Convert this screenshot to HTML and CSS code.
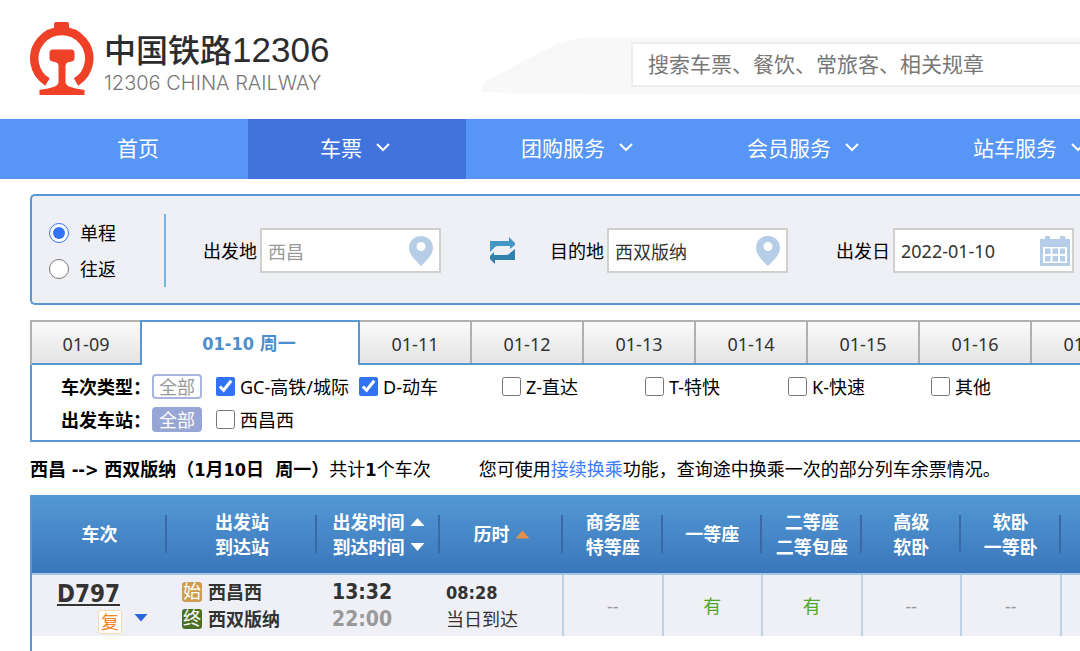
FILE: index.html
```html
<!DOCTYPE html>
<html lang="zh-CN">
<head>
    <meta charset="UTF-8" />
    <meta name="viewport" content="width=device-width, initial-scale=1.0" />
    <title>中国铁路12306</title>
    <link rel="stylesheet" href="styles.css">
</head>
<body>
    <div class="page">

        <header class="header">
            <a class="logo" href="#">
                <svg class="logo-mark" viewBox="0 0 64 74" aria-hidden="true">
                    <path d="M17.500 60A27.500 27.500 0 1 1 46 60" fill="none" stroke="#ee4128" stroke-width="8.500" />
                    <path d="M24 9V2Q24 0 26 0H37Q39 0 39 2V9Z" fill="#ee4128" />
                    <path d="M23 27.500H41Q44.500 27.500 44.500 31V36Q44.500 39 41.500 39.500L38 40.300Q35.500 41 35.500 43.500V59C35.500 64 39 65.500 54.500 68V73H9.500V68C25 65.500 28.500 64 28.500 59V43.500Q28.500 41 26 40.300L22.500 39.500Q19.500 39 19.500 36V31Q19.500 27.500 23 27.500Z" fill="#ee4128" />
                </svg>
                <span class="logo-text">
                    <span class="logo-name">中国铁路<span class="logo-number">12306</span></span>
                    <span class="logo-sub">12306 CHINA RAILWAY</span>
                </span>
            </a>
            <div class="site-search">
                <svg class="search-nose" viewBox="0 0 150 57" aria-hidden="true">
                    <path d="M0 55C0 48 5 44 12 40L66 12C82 3 100 0 118 0H150V57Q70 57 0 55Z" fill="#f8f8f8" />
                </svg>
                <div class="search-body">
                    <input type="text" class="search-input" aria-label="搜索" placeholder="搜索车票、餐饮、常旅客、相关规章" />
                </div>
            </div>
        </header>

        <nav class="nav">
            <a class="nav-item nav-home" href="#">首页</a>
            <a class="nav-item active" href="#">车票
                <svg class="chevron" viewBox="0 0 14 10"><path d="M1 1l6 6 6-6" /></svg>
            </a>
            <a class="nav-item" href="#">团购服务
                <svg class="chevron" viewBox="0 0 14 10"><path d="M1 1l6 6 6-6" /></svg>
            </a>
            <a class="nav-item" href="#">会员服务
                <svg class="chevron" viewBox="0 0 14 10"><path d="M1 1l6 6 6-6" /></svg>
            </a>
            <a class="nav-item" href="#">站车服务
                <svg class="chevron" viewBox="0 0 14 10"><path d="M1 1l6 6 6-6" /></svg>
            </a>
        </nav>

        <main class="content">

            <!-- Ticket query form -->
            <form class="query">
                <div class="trip-type">
                    <label><input type="radio" name="trip" checked />单程</label>
                    <label><input type="radio" name="trip" />往返</label>
                </div>
                <div class="field">
                    <label for="from">出发地</label>
                    <div class="input-box">
                        <input type="text" id="from" class="muted" value="西昌" />
                        <svg class="pin" viewBox="0 0 24 30"><path fill-rule="evenodd" d="M12 0C5 0 0 5 0 12c0 7 7 13 12 18 5-5 12-11 12-18C24 5 19 0 12 0zm0 6a4.500 4.500 0 1 1 0 9 4.500 4.500 0 0 1 0-9z" /></svg>
                    </div>
                </div>
                <button type="button" class="swap" aria-label="交换">
                    <svg viewBox="0 0 26 28">
                        <path d="M1 15V4H20V0L26 6V8L21 12V9H9Q7 9 6 10Z" fill="#4197c5" />
                        <path d="M26 12V23H6V27L1 22V19L5 15V18H17Q20 18 21 16Z" fill="#3280ae" />
                    </svg>
                </button>
                <div class="field">
                    <label for="to">目的地</label>
                    <div class="input-box">
                        <input type="text" id="to" value="西双版纳" />
                        <svg class="pin" viewBox="0 0 24 30"><path fill-rule="evenodd" d="M12 0C5 0 0 5 0 12c0 7 7 13 12 18 5-5 12-11 12-18C24 5 19 0 12 0zm0 6a4.500 4.500 0 1 1 0 9 4.500 4.500 0 0 1 0-9z" /></svg>
                    </div>
                </div>
                <div class="field field-date">
                    <label for="date">出发日</label>
                    <div class="input-box">
                        <input type="text" id="date" value="2022-01-10" />
                        <svg class="calendar" viewBox="0 0 30 30">
                            <path fill-rule="evenodd" d="M0 3H5V0H10V3H20V0H25V3H30V30H0ZM3 11V27H27V11Z" />
                            <path d="M5 12.500h5.500v5.500H5zM12.500 12.500H18v5.500h-5.500zM20 12.500h5v5.500h-5zM5 20h5.500v5.500H5zM12.500 20H18v5.500h-5.500zM20 20h5v5.500h-5z" />
                        </svg>
                    </div>
                </div>
            </form>

            <!-- Date tabs -->
            <div class="tabs">
                <button type="button" class="tab">01-09</button>
                <button type="button" class="tab current">01-10 周一</button>
                <button type="button" class="tab">01-11</button>
                <button type="button" class="tab">01-12</button>
                <button type="button" class="tab">01-13</button>
                <button type="button" class="tab">01-14</button>
                <button type="button" class="tab">01-15</button>
                <button type="button" class="tab">01-16</button>
                <button type="button" class="tab">01-17</button>
            </div>

            <!-- Filters -->
            <div class="filters">
                <div class="filter-row">
                    <span class="filter-name">车次类型：</span>
                    <button type="button" class="all">全部</button>
                    <label><input type="checkbox" checked />GC-高铁/城际</label>
                    <label><input type="checkbox" checked />D-动车</label>
                    <label><input type="checkbox" />Z-直达</label>
                    <label><input type="checkbox" />T-特快</label>
                    <label><input type="checkbox" />K-快速</label>
                    <label><input type="checkbox" />其他</label>
                </div>
                <div class="filter-row">
                    <span class="filter-name">出发车站：</span>
                    <button type="button" class="all selected">全部</button>
                    <label><input type="checkbox" />西昌西</label>
                </div>
            </div>

            <div class="summary">
                <p><strong>西昌 --&gt; 西双版纳（1月10日&nbsp; 周一）</strong>共计<strong>1</strong>个车次</p>
                <p>您可使用<a href="#">接续换乘</a>功能，查询途中换乘一次的部分列车余票情况。</p>
            </div>

            <div class="results">
                <table>
                    <colgroup>
                        <col class="col-train" />
                        <col class="col-station" />
                        <col class="col-time" />
                        <col class="col-time" />
                        <col span="6" />
                    </colgroup>
                    <thead>
                        <tr>
                            <th>车次</th>
                            <th>出发站<br />到达站</th>
                            <th>
                                <span class="sort">出发时间<i class="tri up"></i></span>
                                <span class="sort">到达时间<i class="tri down"></i></span>
                            </th>
                            <th><span class="sort">历时<i class="tri up sorted"></i></span></th>
                            <th>商务座<br />特等座</th>
                            <th>一等座</th>
                            <th>二等座<br />二等包座</th>
                            <th>高级<br />软卧</th>
                            <th>软卧<br />一等卧</th>
                            <th></th>
                        </tr>
                    </thead>
                    <tbody>
                        <tr>
                            <td>
                                <div class="train">
                                    <a href="#">D797</a>
                                    <div class="train-tags"><span class="fu">复</span><i class="tri down more"></i></div>
                                </div>
                            </td>
                            <td>
                                <div class="station"><span class="mark start">始</span>西昌西</div>
                                <div class="station"><span class="mark end">终</span>西双版纳</div>
                            </td>
                            <td class="times"><strong>13:32</strong><strong class="arrive">22:00</strong></td>
                            <td class="duration"><strong>08:28</strong><span>当日到达</span></td>
                            <td class="seat">--</td>
                            <td class="seat yes">有</td>
                            <td class="seat yes">有</td>
                            <td class="seat">--</td>
                            <td class="seat">--</td>
                            <td class="seat"></td>
                        </tr>
                    </tbody>
                </table>
            </div>
        </main>
    </div>
</body>
</html>
```

FILE: styles.css
```css
:root {
    --blue: #5796f6;
    --blue-dark: #4074dc;
    --line: #5798d5;
    --panel: #eff0f6;
    --icon: #b5cde6;
    --font: "Noto Sans", "Noto Sans CJK SC", sans-serif;
    --font-bold: "DejaVu Sans Condensed", "Noto Sans CJK SC", sans-serif;
}

* {
    box-sizing: border-box;
}

body {
    margin: 0;
    overflow-x: hidden;
    background: #fff;
    color: #000;
    font-family: var(--font);
    font-size: 18px;
    line-height: 26px;
}

button,
input {
    font-family: inherit;
    font-size: inherit;
}

strong {
    font-family: var(--font-bold);
}

p {
    margin: 0;
}

svg {
    display: block;
    flex: none;
}

.page {
    min-width: 1160px;
}

/* Header */
.header {
    display: flex;
    align-items: flex-start;
    height: 119px;
    padding-left: 30px;
}

.logo {
    display: flex;
    gap: 10px;
    width: 451px;
    padding-top: 22px;
    color: #2d2d2d;
    text-decoration: none;
}

.logo-mark {
    width: 64px;
    height: 74px;
}

.logo-text {
    display: flex;
    flex-direction: column;
    padding-top: 5px;
}

.logo-name {
    height: 45px;
    font-family: "Noto Sans CJK SC", sans-serif;
    font-size: 32px;
    font-weight: 500;
    line-height: 42px;
}

.logo-number {
    font-family: "Liberation Sans", sans-serif;
    font-size: 35px;
    font-weight: 400;
}

.logo-sub {
    color: #777;
    font-family: Inter, sans-serif;
    font-size: 20px;
    font-weight: 300;
    line-height: 22px;
}

.site-search {
    display: flex;
    flex: 1;
    height: 57px;
    margin-top: 37px;
}

.search-nose {
    width: 150px;
    height: 57px;
}

.search-body {
    flex: 1;
    padding-top: 5px;
    background: #f8f8f8;
}

.search-input {
    width: 100%;
    height: 45px;
    padding: 0 15px 2px;
    border: 2px solid #eee;
    background: #fff;
    font-size: 21px;
}

.search-input::placeholder {
    color: #777;
}

/* Navigation */
.nav {
    display: flex;
    height: 60px;
    padding-left: 28px;
    background: var(--blue);
}

.nav-item {
    display: flex;
    flex: none;
    align-items: center;
    justify-content: center;
    gap: 14px;
    width: 226px;
    padding: 0 4px 2px 0;
    color: #fff;
    font-size: 21px;
    text-decoration: none;
}

.nav-home {
    width: 220px;
    padding-right: 0;
}

.nav-item.active {
    width: 218px;
    background: var(--blue-dark);
}

.chevron {
    width: 14px;
    height: 10px;
    fill: none;
    stroke: #fff;
    stroke-width: 2;
}

.content {
    padding: 15px 0 0 30px;
}

/* Query form */
.query {
    display: flex;
    align-items: center;
    height: 111px;
    padding: 2px 0 0 17px;
    border: 2px solid var(--line);
    border-right: 0;
    border-radius: 5px 0 0 5px;
    background: var(--panel);
}

.trip-type {
    display: flex;
    flex-direction: column;
    justify-content: center;
    gap: 10px;
    width: 117px;
    height: 73px;
    margin-right: 37px;
    border-right: 2px solid #79b6df;
}

.trip-type label {
    display: flex;
    align-items: center;
    gap: 11px;
}

.trip-type input {
    width: 20px;
    height: 20px;
    margin: 0;
    accent-color: #3273f6;
}

.field {
    display: flex;
    align-items: center;
    gap: 3px;
}

.field-date {
    margin-left: 48px;
}

.input-box {
    display: flex;
    align-items: center;
    width: 181px;
    height: 45px;
    padding: 0 6px;
    border: 2px solid #d0d0cc;
    background: #fff;
}

.field-date .input-box {
    padding-right: 2px;
}

.input-box input {
    flex: 1;
    min-width: 0;
    padding: 0;
    border: 0;
    outline: 0;
    background: none;
    color: #333;
}

.input-box input.muted {
    color: #999;
}

.pin {
    width: 24px;
    height: 30px;
    fill: var(--icon);
}

.calendar {
    width: 30px;
    height: 30px;
    fill: var(--icon);
}

.swap {
    width: 26px;
    margin: 0 35px 0 48px;
    padding: 0;
    border: 0;
    background: none;
    cursor: pointer;
}

/* Date tabs */
.tabs {
    display: flex;
    height: 45px;
    margin-top: 15px;
    border-left: 2px solid #b0b0b0;
    box-shadow: inset 0 -2px var(--line);
}

.tab {
    flex: none;
    width: 112px;
    height: 43px;
    padding: 2px 0 0;
    border: 0;
    border-top: 2px solid #b0b0b0;
    border-right: 2px solid #b0b0b0;
    background: linear-gradient(#fafafa, #e4e4e4);
    color: #333;
    cursor: pointer;
}

.tab:first-child {
    width: 108px;
    border-right: 0;
}

.tab.current {
    width: 220px;
    height: 45px;
    padding: 0 2px 4px 0;
    border: 2px solid var(--line);
    border-bottom: 0;
    background: #fff;
    color: #4b8fce;
    font-family: var(--font-bold);
    font-weight: bold;
}

/* Filters */
.filters {
    padding: 5px 0 4px 29px;
    border-left: 2px solid var(--line);
    border-bottom: 2px solid var(--line);
}

.filter-row {
    display: grid;
    grid-template-columns: 91px 64px repeat(6, 143px);
    align-items: center;
    height: 33px;
}

.filter-name {
    font-weight: bold;
}

.filter-row label {
    display: flex;
    align-items: center;
    gap: 5px;
    white-space: nowrap;
}

.filter-row input {
    width: 19px;
    height: 19px;
    margin: 0;
    accent-color: #3273f6;
}

.all {
    width: 50px;
    height: 25px;
    padding: 0;
    border: 2px solid #a9b5dc;
    border-radius: 4px;
    background: #fff;
    color: #999;
    line-height: 20px;
    cursor: pointer;
}

.all.selected {
    border-color: #97a6d4;
    background: #97a6d4;
    color: #fff;
}

/* Summary line */
.summary {
    display: flex;
    gap: 48px;
    padding: 14px 0 12px;
    white-space: nowrap;
}

.summary a {
    color: #3b7cff;
    text-decoration: none;
}

/* Results table */
.results {
    min-height: 157px;
    border-left: 2px solid var(--line);
}

table {
    width: 100%;
    border-collapse: collapse;
    table-layout: fixed;
}

.col-train {
    width: 135px;
}

.col-station {
    width: 150px;
}

.col-time {
    width: 123px;
}

thead {
    background: linear-gradient(#5399d5, #3a76ba);
}

th {
    height: 79px;
    padding: 1px 0 0;
    border-bottom: 2px solid #a7c6e0;
    background: linear-gradient(#3a68a8, #3a68a8) right center / 2px 38px no-repeat;
    color: #fff;
    line-height: 25px;
}

td {
    height: 62px;
    padding: 0;
    background: var(--panel);
    color: #333;
}

.sort {
    display: flex;
    align-items: center;
    justify-content: center;
    gap: 6px;
}

.tri {
    width: 14px;
    height: 8px;
    background: #fff;
}

.tri.up {
    clip-path: polygon(50% 0, 100% 100%, 0 100%);
}

.tri.down {
    clip-path: polygon(0 0, 100% 0, 50% 100%);
}

.tri.sorted {
    background: #e59048;
}

.tri.more {
    margin-top: 4px;
    background: #2a66dd;
}

.train {
    padding-left: 25px;
}

.train a {
    display: block;
    color: #333;
    font-family: var(--font-bold);
    font-size: 24px;
    font-weight: bold;
    line-height: 32px;
}

.train-tags {
    display: flex;
    align-items: flex-start;
    gap: 12px;
    padding-left: 41px;
}

.fu {
    width: 24px;
    height: 24px;
    border: 1px solid #fbd9ae;
    border-radius: 3px;
    background: #fff;
    color: #f58220;
    line-height: 22px;
    text-align: center;
}

.station {
    display: flex;
    align-items: center;
    gap: 6px;
    padding-left: 15px;
    font-weight: 600;
    line-height: 27px;
}

.mark {
    width: 20px;
    height: 20px;
    border-radius: 3px;
    color: #fff;
    font-size: 18px;
    font-weight: 400;
    line-height: 19px;
    text-align: center;
}

.mark.start {
    background: #cc9c4f;
}

.mark.end {
    background: #4a7023;
}

.times strong,
.duration strong,
.duration span {
    display: block;
    line-height: 27px;
}

.times {
    padding-left: 15px;
    font-size: 21px;
}

.times .arrive {
    color: #999;
}

.duration {
    padding-left: 6px;
}

.seat {
    border-left: 2px solid #bdd3e3;
    color: #999;
    text-align: center;
}

.seat.yes {
    color: #50a52e;
}
```
